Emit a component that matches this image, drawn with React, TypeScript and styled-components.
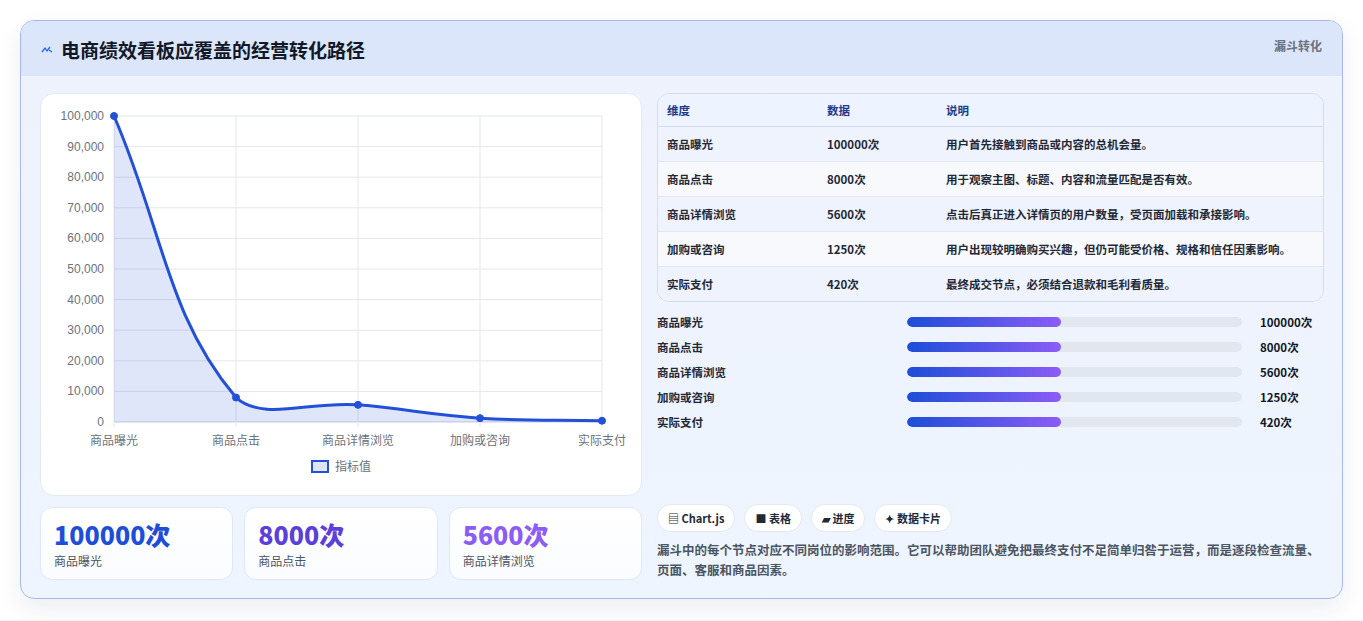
import React from "react";
import styled, { createGlobalStyle } from "styled-components";

const Global = createGlobalStyle`
  body { margin: 0; background: #f3f4f6; font-family: "Noto Sans CJK SC", "Noto Sans", sans-serif; }
`;

const Page = styled.div`
  padding: 20px 20px 21px 20px;
  background: #fff;
`;

const Board = styled.div`
  border: 1px solid #a9b8ea;
  border-radius: 14px;
  background: linear-gradient(180deg, #eef2fd 0%, #eef5ff 100%);
  box-shadow: 0 10px 24px rgba(30, 41, 90, 0.08);
  overflow: hidden;
`;

const Header = styled.div`
  height: 55px;
  background: #dce6fb;
  display: flex;
  justify-content: space-between;
  align-items: flex-start;
  padding: 0 20px;
`;

const Title = styled.h1`
  margin: 15px 0 0;
  font-size: 19px;
  font-weight: 700;
  color: #111827;
  display: flex;
  align-items: center;
  gap: 8px;
`;

const Tag = styled.span`
  margin-top: 16px;
  font-size: 12px;
  font-weight: 700;
  color: #6b7280;
`;

const Body = styled.div`
  display: grid;
  grid-template-columns: 602px 1fr;
  gap: 15px;
  padding: 17px 18px 18px 19px;
`;

const Col = styled.div`
  display: flex;
  flex-direction: column;
`;

const ChartCard = styled.div`
  height: 403px;
  background: #fff;
  border: 1px solid #e3e9f6;
  border-radius: 14px;
  box-sizing: border-box;
`;

const Stats = styled.div`
  display: grid;
  grid-template-columns: repeat(3, 1fr);
  gap: 11px;
  margin-top: 11px;
`;

const Stat = styled.div`
  height: 73px;
  box-sizing: border-box;
  background: linear-gradient(180deg, #fff, #fafcff);
  border: 1px solid #e0e8f7;
  border-radius: 12px;
  padding: 10px 13px;
`;

const StatValue = styled.div<{ $c: string }>`
  font-size: 25px;
  font-weight: 800;
  line-height: 32px;
  color: ${(p) => p.$c};
`;

const StatLabel = styled.div`
  font-size: 12px;
  color: #4b5563;
  margin-top: 2px;
`;

const Table = styled.table`
  width: 100%;
  border-collapse: separate;
  border-spacing: 0;
  border: 1px solid #d5dcec;
  border-radius: 12px;
  overflow: hidden;
  font-size: 11.5px;
  font-weight: 600;
  color: #1f2937;
  th {
    text-align: left;
    color: #1e3a8a;
    font-weight: 700;
    height: 32px;
    background: #eef4ff;
    border-bottom: 1px solid #d5dcec;
  }
  td { height: 34px; border-bottom: 1px solid #e3e8f2; }
  tr:last-child td { border-bottom: none; }
  tbody tr:nth-child(odd) td { background: #eff3fe; }
  tbody tr:nth-child(even) td { background: #f7f9fd; }
  th, td { padding: 0 9px; }
`;

const Bars = styled.div`
  display: flex;
  flex-direction: column;
  gap: 7px;
  margin-top: 11px;
`;

const BarRow = styled.div`
  display: grid;
  grid-template-columns: 250px 344px 1fr;
  align-items: center;
  gap: 0;
  height: 18px;
  font-size: 11.5px;
  font-weight: 600;
  color: #1f2937;
`;

const Track = styled.div`
  height: 10px;
  border-radius: 5px;
  background: #e2e6ef;
  overflow: hidden;
  margin-right: 9px;
`;

const Fill = styled.div`
  height: 100%;
  border-radius: 5px;
  background: linear-gradient(90deg, #1d4ed8, #8b5cf6);
`;

const BarValue = styled.span`
  font-weight: 700;
  color: #111827;
  margin-left: 9px;
`;

const Chips = styled.div`
  display: flex;
  gap: 9px;
  margin-top: auto;
`;

const Chip = styled.span`
  height: 28px;
  padding: 0 10px;
  box-sizing: border-box;
  display: inline-flex;
  align-items: center;
  gap: 4px;
  background: #fff;
  border: 1px solid #e5e9f2;
  border-radius: 14px;
  font-size: 11px;
  font-weight: 700;
  color: #1f2937;
`;

const Note = styled.p`
  margin: 8px 0 0;
  font-size: 12.5px;
  line-height: 20px;
  font-weight: 600;
  color: #4b5563;
`;

const labels = ["商品曝光", "商品点击", "商品详情浏览", "加购或咨询", "实际支付"];
const values = [100000, 8000, 5600, 1250, 420];
const notes = [
  "用户首先接触到商品或内容的总机会量。",
  "用于观察主图、标题、内容和流量匹配是否有效。",
  "点击后真正进入详情页的用户数量，受页面加载和承接影响。",
  "用户出现较明确购买兴趣，但仍可能受价格、规格和信任因素影响。",
  "最终成交节点，必须结合退款和毛利看质量。",
];

const X0 = 73, X1 = 561, Y0 = 22, Y1 = 328;
const px = (i: number) => X0 + (i * (X1 - X0)) / 4;
const py = (v: number) => Y1 - (v / 100000) * (Y1 - Y0);

function curve() {
  const pts = values.map((v, i) => [px(i), py(v)]);
  let d = `M${pts[0][0]},${pts[0][1]}`;
  const t = 0.4;
  const cp = pts.map((p, i) => {
    const prev = pts[Math.max(0, i - 1)];
    const next = pts[Math.min(pts.length - 1, i + 1)];
    const d01 = Math.hypot(p[0] - prev[0], p[1] - prev[1]);
    const d12 = Math.hypot(next[0] - p[0], next[1] - p[1]);
    const s = d01 + d12 || 1;
    const fa = (t * d01) / s, fb = (t * d12) / s;
    return {
      a: [p[0] - fa * (next[0] - prev[0]), Math.min(Y1, p[1] - fa * (next[1] - prev[1]))],
      b: [p[0] + fb * (next[0] - prev[0]), Math.min(Y1, p[1] + fb * (next[1] - prev[1]))],
    };
  });
  for (let i = 1; i < pts.length; i++) {
    d += ` C${cp[i - 1].b[0]},${cp[i - 1].b[1]} ${cp[i].a[0]},${cp[i].a[1]} ${pts[i][0]},${pts[i][1]}`;
  }
  return d;
}

function LineChart() {
  const d = curve();
  const ticks = Array.from({ length: 11 }, (_, i) => i * 10000);
  return (
    <svg width="602" height="403" style={{ display: "block" }} fontFamily="Liberation Sans, Noto Sans CJK SC, sans-serif">
      {ticks.map((t) => (
        <g key={t}>
          <line x1={X0} x2={X1} y1={py(t)} y2={py(t)} stroke={t === 0 ? "#c9d0de" : "#e5e7eb"} />
          <text x={X0 - 10} y={py(t) + 4} fontSize="12" fill="#6b7280" textAnchor="end">
            {t.toLocaleString("en-US")}
          </text>
        </g>
      ))}
      {labels.map((l, i) => (
        <g key={l}>
          <line x1={px(i)} x2={px(i)} y1={Y0} y2={Y1 + 5} stroke="#e5e7eb" />
          <text x={px(i)} y={Y1 + 23} fontSize="12" fill="#6b7280" textAnchor="middle" fontFamily="Noto Sans CJK SC, sans-serif">{l}</text>
        </g>
      ))}
      <path d={`${d} L${X1},${Y1} L${X0},${Y1} Z`} fill="rgba(37,80,216,0.14)" />
      <path d={d} fill="none" stroke="#2250d6" strokeWidth="3" />
      {values.map((v, i) => (
        <circle key={i} cx={px(i)} cy={py(v)} r="3.5" fill="#2250d6" stroke="#2250d6" />
      ))}
      <rect x="271" y="367" width="16" height="11" fill="#dfe5f7" stroke="#2250d6" strokeWidth="2" />
      <text x="294" y="377" fontSize="12" fill="#6b7280" fontFamily="Noto Sans CJK SC, sans-serif">指标值</text>
    </svg>
  );
}

export default function App() {
  return (
    <Page>
      <Global />
      <Board>
        <Header>
          <Title>
            <svg width="12" height="8" viewBox="0 0 12 8">
              <path d="M1 6 L4 2 L6 5 L9 1 M8 4 L11 6" stroke="#2563eb" strokeWidth="1.3" fill="none" />
            </svg>
            电商绩效看板应覆盖的经营转化路径
          </Title>
          <Tag>漏斗转化</Tag>
        </Header>
        <Body>
          <Col>
            <ChartCard>
              <LineChart />
            </ChartCard>
            <Stats>
              <Stat><StatValue $c="#1d4ed8">100000次</StatValue><StatLabel>商品曝光</StatLabel></Stat>
              <Stat><StatValue $c="#5b3fd8">8000次</StatValue><StatLabel>商品点击</StatLabel></Stat>
              <Stat><StatValue $c="#8b5cf6">5600次</StatValue><StatLabel>商品详情浏览</StatLabel></Stat>
            </Stats>
          </Col>
          <Col>
            <Table>
              <colgroup>
                <col style={{ width: 160 }} />
                <col style={{ width: 119 }} />
                <col />
              </colgroup>
              <thead>
                <tr><th>维度</th><th>数据</th><th>说明</th></tr>
              </thead>
              <tbody>
                {labels.map((l, i) => (
                  <tr key={l}><td>{l}</td><td>{values[i]}次</td><td>{notes[i]}</td></tr>
                ))}
              </tbody>
            </Table>
            <Bars>
              {labels.map((l, i) => (
                <BarRow key={l}>
                  <span>{l}</span>
                  <Track><Fill style={{ width: "46%" }} /></Track>
                  <BarValue>{values[i]}次</BarValue>
                </BarRow>
              ))}
            </Bars>
            <Chips>
              <Chip>▤ Chart.js</Chip>
              <Chip>■ 表格</Chip>
              <Chip>▰ 进度</Chip>
              <Chip>✦ 数据卡片</Chip>
            </Chips>
            <Note>
              漏斗中的每个节点对应不同岗位的影响范围。它可以帮助团队避免把最终支付不足简单归咎于运营，而是逐段检查流量、页面、客服和商品因素。
            </Note>
          </Col>
        </Body>
      </Board>
    </Page>
  );
}
